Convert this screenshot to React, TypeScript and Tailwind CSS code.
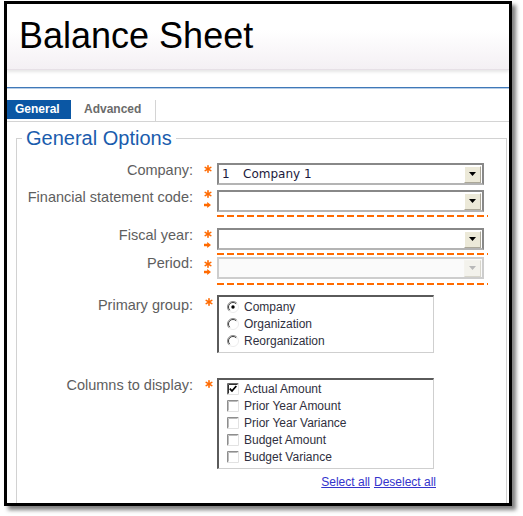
import React from "react";

function Asterisk() {
  return (
    <svg width="8" height="8" viewBox="0 0 8 8" className="block">
      <g stroke="#ff6a00" strokeWidth="1.6" strokeLinecap="round">
        <line x1="4" y1="0.8" x2="4" y2="7.2" />
        <line x1="1.2" y1="2.4" x2="6.8" y2="5.6" />
        <line x1="1.2" y1="5.6" x2="6.8" y2="2.4" />
      </g>
    </svg>
  );
}

function Arrow() {
  return (
    <svg width="7" height="6" viewBox="0 0 7 6" className="block">
      <path d="M0 1.8h3.2V0L7 3 3.2 6V4.2H0z" fill="#ff6a00" />
    </svg>
  );
}

function Radio({ checked }: { checked?: boolean }) {
  return (
    <svg width="12" height="12" viewBox="0 0 12 12" className="block shrink-0">
      <circle cx="6" cy="6" r="5.5" fill="#fff" />
      <path d="M2.1 9.9A5.5 5.5 0 0 1 9.9 2.1" stroke="#8c8c8c" fill="none" />
      <path d="M2.8 9.2A4.5 4.5 0 0 1 9.2 2.8" stroke="#404040" fill="none" />
      <path d="M9.9 2.1A5.5 5.5 0 0 1 2.1 9.9" stroke="#ececec" fill="none" />
      {checked && <circle cx="6" cy="6" r="1.7" fill="#000" />}
    </svg>
  );
}

function Checkbox({ checked }: { checked?: boolean }) {
  return (
    <svg width="12" height="12" viewBox="0 0 12 12" className="block shrink-0">
      <rect x="0" y="0" width="12" height="12" fill="#fff" />
      <path d="M0.5 11.5V0.5H11.5" stroke={checked ? "#6a6a6a" : "#8e8e8e"} fill="none" />
      <path d="M1.5 10.5V1.5H10.5" stroke={checked ? "#303030" : "#bcbcbc"} fill="none" />
      <path d="M0.5 11.5H11.5V0.5" stroke="#e2e2e2" fill="none" />
      {checked && (
        <path d="M2.8 5.6l2.2 2.4 4.3-5" stroke="#000" strokeWidth="1.8" fill="none" />
      )}
    </svg>
  );
}

function Select({ value, disabled }: { value?: string; disabled?: boolean }) {
  return (
    <div
      className={
        disabled
          ? "flex h-[22px] w-[267px] items-center border-2 border-[#cdcdcd] bg-[#fafafa]"
          : "flex h-[22px] w-[267px] items-center border-2 border-[#888888] border-b-[#b4b4b4] bg-white"
      }
    >
      <div className="flex flex-1 pl-[3px] font-['DejaVu_Sans',Verdana,sans-serif] text-[12px] leading-none text-[#1c1a3c]">
        {value && (
          <>
            <span className="w-[21px]">1</span>
            <span>{value}</span>
          </>
        )}
      </div>
      <div
        className={
          disabled
            ? "mr-px flex h-[17px] w-[17px] items-center justify-center border border-[#f4f3ee] border-r-[#d8d6cc] border-b-[#d8d6cc] bg-[#f3f2ec]"
            : "mr-px flex h-[17px] w-[17px] items-center justify-center border border-white border-r-[#aca899] border-b-[#aca899] bg-[#ece9d8]"
        }
      >
        <svg width="7" height="4" viewBox="0 0 7 4">
          <path d="M0 0h7L3.5 4z" fill={disabled ? "#b8b8b8" : "#000"} />
        </svg>
      </div>
    </div>
  );
}

function Dashed() {
  return (
    <div className="h-[2px] w-[271px] bg-[repeating-linear-gradient(90deg,#ff6a00_0_7px,transparent_7px_10px)]" />
  );
}

const labelCls =
  "w-[176px] shrink-0 text-right text-[14.5px] leading-[16px] text-[#5e5e5e]";

const columns = [
  { label: "Actual Amount", checked: true },
  { label: "Prior Year Amount" },
  { label: "Prior Year Variance" },
  { label: "Budget Amount" },
  { label: "Budget Variance" },
];

export default function App() {
  return (
    <div className="h-[516px] w-[523px] bg-white pl-[4px] pt-px font-['Liberation_Sans',Arial,sans-serif]">
      <div className="h-[505px] w-[508px] overflow-hidden border-[3px] border-black bg-white shadow-[4px_4px_4px_rgba(0,0,0,0.5)]">
        <header className="h-[66px] border-b border-[#e6e0e6] bg-linear-to-b from-white from-40% to-[#f4f0f4] pl-[12px] pt-[14px] shadow-[0_2px_3px_rgba(0,0,0,0.1)]">
          <h1 className="text-[36px] leading-none text-black">Balance Sheet</h1>
        </header>

        <div className="mt-[17px] h-px bg-[#3f78b8]" />
        <div className="h-px bg-[#b7cde6]" />

        <div className="mt-[11px] flex h-[22px] border-b border-[#d4d4d4]">
          <div className="h-[19px] bg-[#0b57a4] pl-[8px] pr-[11px] text-[12px] font-bold leading-[19px] text-white">
            General
          </div>
          <div className="w-[85px] border-r border-[#d4d4d4] text-center text-[12px] font-bold leading-[19px] text-[#6b6b6b]">
            Advanced
          </div>
        </div>

        <fieldset className="mr-[2px] ml-[9px] mt-[5px] border border-[#d2d2d2] pb-10">
          <legend className="ml-[5px] px-[4px] text-[20px] leading-[22px] text-[#1a5cad]">
            General Options
          </legend>

          {/* Company */}
          <div className="mt-[13px] flex items-start">
            <div className={labelCls}>Company:</div>
            <div className="w-[24px] pl-[11px] pt-[3px]">
              <Asterisk />
            </div>
            <div className="mt-px">
              <Select value="Company 1" />
            </div>
          </div>

          {/* Financial statement code */}
          <div className="mt-[4px] flex items-start">
            <div className={labelCls}>Financial statement code:</div>
            <div className="w-[24px] pl-[11px] pt-px">
              <Asterisk />
              <div className="mt-[4px]">
                <Arrow />
              </div>
            </div>
            <div className="mt-px">
              <Select />
              <div className="mt-[3px]">
                <Dashed />
              </div>
            </div>
          </div>

          {/* Fiscal year */}
          <div className="mt-[10px] flex items-start">
            <div className={labelCls}>Fiscal year:</div>
            <div className="w-[24px] pl-[11px] pt-[3px]">
              <Asterisk />
              <div className="mt-[4px]">
                <Arrow />
              </div>
            </div>
            <div className="mt-px">
              <Select />
              <div className="mt-[3px]">
                <Dashed />
              </div>
            </div>
          </div>

          {/* Period */}
          <div className="flex items-start">
            <div className={labelCls}>Period:</div>
            <div className="w-[24px] pl-[11px] pt-[5px]">
              <Asterisk />
              <div className="mt-px">
                <Arrow />
              </div>
            </div>
            <div className="mt-[2px]">
              <Select disabled />
              <div className="mt-[4px]">
                <Dashed />
              </div>
            </div>
          </div>

          {/* Primary group */}
          <div className="mt-[10px] flex items-start">
            <div className={labelCls + " mt-[2px]"}>Primary group:</div>
            <div className="w-[24px] pl-[12px] pt-[3px]">
              <Asterisk />
            </div>
            <div className="w-[217px] border-t-2 border-l-2 border-r border-b border-t-[#5a5a5a] border-l-[#5a5a5a] border-r-[#cfcfcf] border-b-[#cfcfcf] bg-white pb-[3px] pt-px">
              {["Company", "Organization", "Reorganization"].map((item, i) => (
                <div key={item} className="flex h-[17px] items-center gap-[5px] pl-[8px] text-[12px] text-[#303040]">
                  <Radio checked={i === 0} />
                  <span>{item}</span>
                </div>
              ))}
            </div>
          </div>

          {/* Columns to display */}
          <div className="mt-[24px] flex items-start">
            <div className={labelCls}>Columns to display:</div>
            <div className="w-[24px] pl-[12px] pt-[3px]">
              <Asterisk />
            </div>
            <div className="mt-px">
              <div className="w-[217px] border-t-2 border-l-2 border-r border-b border-t-[#5a5a5a] border-l-[#5a5a5a] border-r-[#cfcfcf] border-b-[#cfcfcf] bg-white pb-[3px]">
                {columns.map((c) => (
                  <div key={c.label} className="flex h-[17px] items-center gap-[5px] pl-[8px] text-[12px] text-[#303040]">
                    <Checkbox checked={c.checked} />
                    <span>{c.label}</span>
                  </div>
                ))}
              </div>
              <div className="mt-[6px] flex w-[219px] justify-end gap-[4px] text-[12px] leading-[14px] text-[#3434cc]">
                <a className="underline">Select all</a>
                <a className="underline">Deselect all</a>
              </div>
            </div>
          </div>
        </fieldset>
      </div>
    </div>
  );
}
